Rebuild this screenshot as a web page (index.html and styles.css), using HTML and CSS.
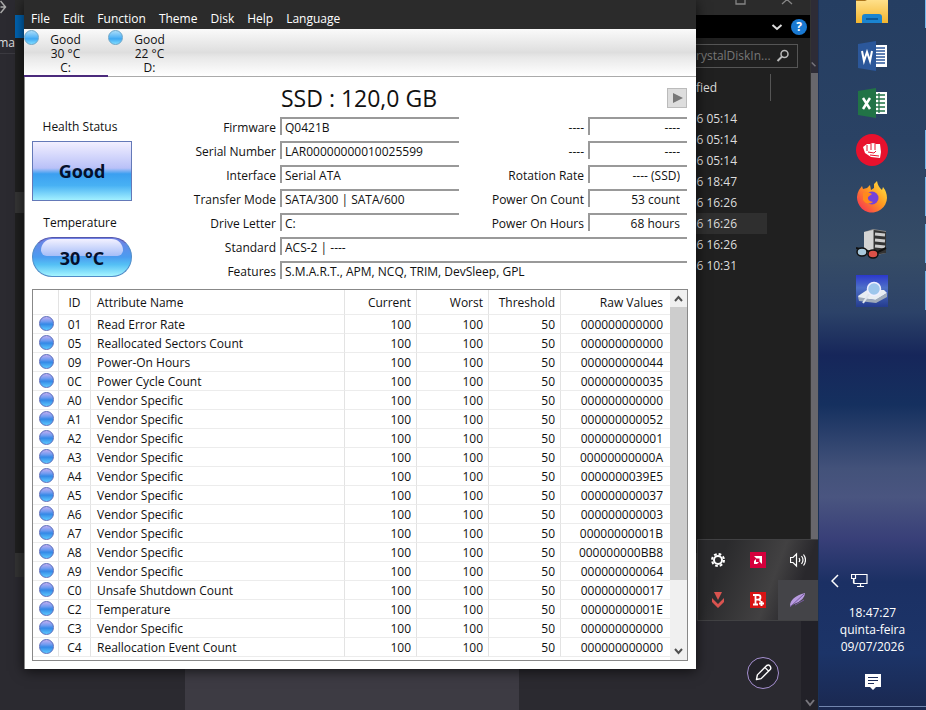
FILE: index.html
```
<!DOCTYPE html>
<html lang="en">
<head>
<meta charset="utf-8">
<title>CrystalDiskInfo</title>
<link rel="stylesheet" href="styles.css">
</head>
<body>
<div class="desktop">
  <main class="workspace">
    <div class="backpage">
      <div class="back-left">
        <svg class="arrow" viewBox="0 0 14 16"><path d="M0 7h5M0 1l5 6-5 6" fill="none" stroke="#aaa" stroke-width="1.5"/></svg>
        <span>tma</span>
      </div>
      <div class="back-panel"></div>
      <div class="back-scroll top"><svg viewBox="0 0 8 8"><path d="M1 2l5 5" stroke="#77757c" stroke-width="2"/></svg></div>
      <div class="back-scroll bottom"><svg viewBox="0 0 10 8"><path d="M1 1l4 5 4-5" fill="none" stroke="#77757c" stroke-width="2"/></svg></div>
      <button class="compose" aria-label="Edit"><svg viewBox="0 0 32 32"><path d="M9 23l1-5 10-10q2-1 3 0 2 2 1 4L14 22zM18 10l4 4" fill="none" stroke="#fff" stroke-width="1.5" stroke-linejoin="round"/></svg></button>
    </div>

    <section class="explorer" aria-label="Explorer">
      <div class="ex-title"><svg viewBox="0 0 114 15"><path d="M40-6h9v10h-9zM86-5l10 9M96-5l-10 9" fill="none" stroke="#858585" stroke-width="1.3"/></svg></div>
      <div class="ex-ribbon">
        <svg class="chev" viewBox="0 0 12 12"><path d="M1.500 4l4.500 4 4.500-4" fill="none" stroke="#ddd" stroke-width="2"/></svg>
        <button class="help" aria-label="Help">?</button>
      </div>
      <div class="ex-address"><div class="search"><span>rystalDiskIn...</span><svg viewBox="0 0 14 14"><circle cx="8.500" cy="5" r="3.500" fill="none" stroke="#bbb" stroke-width="1.500"/><path d="M6 7.500L1.500 12" stroke="#bbb" stroke-width="2"/></svg></div></div>
      <div class="ex-head"><span>fied</span></div>
      <ul class="ex-list">
        <li>6 05:14</li><li>6 05:14</li><li>6 05:14</li><li>6 18:47</li><li class="tree">6 16:26</li><li class="sel">6 16:26</li><li>6 16:26</li><li>6 10:31</li>
      </ul>
      <div class="ex-status"></div>
    </section>

    <section class="tray" aria-label="Tray">
      <button aria-label="Settings"><svg viewBox="0 0 16 16"><circle cx="8" cy="8" r="4" fill="none" stroke="#fff" stroke-width="2"/><circle cx="8" cy="8" r="6" fill="none" stroke="#fff" stroke-width="2" stroke-dasharray="2.700 2"/></svg></button>
      <button aria-label="Graphics"><svg viewBox="0 0 16 16"><path fill="#d5003c" d="M0 0h16v16H0z"/><path fill="#fff" d="M4 4h8v8l-2.500-2.500v-3h-3zM4 9l2-2v3h3l-2 2H4z"/></svg></button>
      <button aria-label="Volume"><svg viewBox="0 0 16 16"><path d="M.500 5.500H3l3.500-3.500v12L3 10.500H.500zM9 6q1.500 2 0 4M11.500 4q3 4 0 8M13.500 2.500q4 5.500 0 11" fill="none" stroke="#fff" stroke-width="1.200"/></svg></button>
      <button aria-label="Driver"><svg viewBox="0 0 16 16"><path fill="#d9534f" d="M4 0h8l-4 8zM2 6l6 6 6-6v4l-6 6-6-6z"/></svg></button>
      <button aria-label="Antivirus"><svg viewBox="0 0 16 16"><path fill="#d81414" d="M0 0h16v16H0z"/><path d="M3 3h5q2.500 0 2.500 2.300T8 7.600H5h3.500q2 .4 1.500 2M3 12.500h5M5.500 3v9" fill="none" stroke="#fff" stroke-width="1.800"/><path d="M11.500 9v5M9 11.500h5" stroke="#fff" stroke-width="2"/></svg></button>
      <button class="active" aria-label="Feather"><svg viewBox="0 0 16 16"><path fill="#b89be0" d="M0 14Q0 5 15 1q0 7-11 11z"/><path d="M0 15L14 2M5 13l9-5" stroke="#765a9e" stroke-width="1"/></svg></button>
    </section>

    <section class="diskinfo" aria-label="CrystalDiskInfo">
      <nav class="menu">
        <button>File</button><button>Edit</button><button>Function</button><button>Theme</button><button>Disk</button><button>Help</button><button>Language</button>
      </nav>
      <div class="disks">
        <button class="disk current"><i class="orb light"></i><span>Good<br>30 °C<br>C:</span></button>
        <button class="disk"><i class="orb light"></i><span>Good<br>22 °C<br>D:</span></button>
      </div>
      <div class="body">
        <div class="summary">
          <div class="status">
            <div class="caption">Health Status</div>
            <button class="health">Good</button>
            <div class="caption second">Temperature</div>
            <button class="temp"><span>30 °C</span></button>
          </div>
          <div class="details">
            <div class="model"><h1>SSD : 120,0 GB</h1><button class="next" aria-label="Next disk"><svg viewBox="0 0 18 18"><path d="M5 4l10 5-10 5z" fill="#777"/></svg></button></div>
            <div class="fields">
              <label for="fw">Firmware</label><input id="fw" readonly value="Q0421B">
              <label for="x1">----</label><input id="x1" class="num" readonly value="----">
              <label for="sn">Serial Number</label><input id="sn" readonly value="LAR00000000010025599">
              <label for="x2">----</label><input id="x2" class="num" readonly value="----">
              <label for="if">Interface</label><input id="if" readonly value="Serial ATA">
              <label for="rr">Rotation Rate</label><input id="rr" class="num" readonly value="---- (SSD)">
              <label for="tm">Transfer Mode</label><input id="tm" readonly value="SATA/300 | SATA/600">
              <label for="pc">Power On Count</label><input id="pc" class="num" readonly value="53 count">
              <label for="dl">Drive Letter</label><input id="dl" readonly value="C:">
              <label for="ph">Power On Hours</label><input id="ph" class="num" readonly value="68 hours">
              <label for="st">Standard</label><input id="st" class="wide" readonly value="ACS-2 | ----">
              <label for="ft">Features</label><input id="ft" class="wide" readonly value="S.M.A.R.T., APM, NCQ, TRIM, DevSleep, GPL">
            </div>
          </div>
        </div>
        <div class="list">
          <div class="list-view">
          <table>
            <colgroup><col class="c-orb"><col class="c-id"><col><col class="c-n"><col class="c-n"><col class="c-n"><col class="c-raw"></colgroup>
            <thead><tr><th></th><th>ID</th><th>Attribute Name</th><th>Current</th><th>Worst</th><th>Threshold</th><th>Raw Values</th></tr></thead>
            <tbody>
            <tr><td><i class="orb"></i></td><td>01</td><td>Read Error Rate</td><td>100</td><td>100</td><td>50</td><td>000000000000</td></tr>
            <tr><td><i class="orb"></i></td><td>05</td><td>Reallocated Sectors Count</td><td>100</td><td>100</td><td>50</td><td>000000000000</td></tr>
            <tr><td><i class="orb"></i></td><td>09</td><td>Power-On Hours</td><td>100</td><td>100</td><td>50</td><td>000000000044</td></tr>
            <tr><td><i class="orb"></i></td><td>0C</td><td>Power Cycle Count</td><td>100</td><td>100</td><td>50</td><td>000000000035</td></tr>
            <tr><td><i class="orb"></i></td><td>A0</td><td>Vendor Specific</td><td>100</td><td>100</td><td>50</td><td>000000000000</td></tr>
            <tr><td><i class="orb"></i></td><td>A1</td><td>Vendor Specific</td><td>100</td><td>100</td><td>50</td><td>000000000052</td></tr>
            <tr><td><i class="orb"></i></td><td>A2</td><td>Vendor Specific</td><td>100</td><td>100</td><td>50</td><td>000000000001</td></tr>
            <tr><td><i class="orb"></i></td><td>A3</td><td>Vendor Specific</td><td>100</td><td>100</td><td>50</td><td>00000000000A</td></tr>
            <tr><td><i class="orb"></i></td><td>A4</td><td>Vendor Specific</td><td>100</td><td>100</td><td>50</td><td>0000000039E5</td></tr>
            <tr><td><i class="orb"></i></td><td>A5</td><td>Vendor Specific</td><td>100</td><td>100</td><td>50</td><td>000000000037</td></tr>
            <tr><td><i class="orb"></i></td><td>A6</td><td>Vendor Specific</td><td>100</td><td>100</td><td>50</td><td>000000000003</td></tr>
            <tr><td><i class="orb"></i></td><td>A7</td><td>Vendor Specific</td><td>100</td><td>100</td><td>50</td><td>00000000001B</td></tr>
            <tr><td><i class="orb"></i></td><td>A8</td><td>Vendor Specific</td><td>100</td><td>100</td><td>50</td><td>000000000BB8</td></tr>
            <tr><td><i class="orb"></i></td><td>A9</td><td>Vendor Specific</td><td>100</td><td>100</td><td>50</td><td>000000000064</td></tr>
            <tr><td><i class="orb"></i></td><td>C0</td><td>Unsafe Shutdown Count</td><td>100</td><td>100</td><td>50</td><td>000000000017</td></tr>
            <tr><td><i class="orb"></i></td><td>C2</td><td>Temperature</td><td>100</td><td>100</td><td>50</td><td>00000000001E</td></tr>
            <tr><td><i class="orb"></i></td><td>C3</td><td>Vendor Specific</td><td>100</td><td>100</td><td>50</td><td>000000000000</td></tr>
            <tr><td><i class="orb"></i></td><td>C4</td><td>Reallocation Event Count</td><td>100</td><td>100</td><td>50</td><td>000000000000</td></tr>
            </tbody>
          </table>
          </div>
          <div class="scrollbar">
            <svg viewBox="0 0 17 17"><path d="M5 11l3.500-4 3.500 4" fill="none" stroke="#505050" stroke-width="2"/></svg>
            <div class="thumb"></div>
            <svg viewBox="0 0 17 17"><path d="M5 6l3.500 4L12 6" fill="none" stroke="#505050" stroke-width="2"/></svg>
          </div>
        </div>
      </div>
    </section>
  </main>

  <aside class="taskbar">
    <div class="apps">
      <button class="run" aria-label="Files"><svg viewBox="0 0 32 32"><defs><linearGradient id="fo" x2="0" y2="1"><stop stop-color="#ffe08a"/><stop offset="1" stop-color="#f3b52e"/></linearGradient></defs><path fill="url(#fo)" d="M0 0h32v23H0z"/><path fill="#a9731c" d="M0 0h11l-2 1H0z"/><path fill="#1b84d0" d="M6 23V17q0-3 3-3h14q3 0 3 3v6z"/><path fill="#0c5a9c" d="M10 18h12v2H10z"/></svg></button>
      <button aria-label="Word"><svg viewBox="0 0 32 32"><path fill="#fff" d="M16 5h14v22H16z"/><path d="M18 8h10M18 11h10M18 14h10M18 17h10M18 20h10M18 23h10" stroke="#2b579a" stroke-width="1.300"/><path fill="#2b579a" d="M1 4l18-3v30L1 28z"/><path d="M5 11l2 10 3-9 3 9 2-10" fill="none" stroke="#fff" stroke-width="2"/></svg></button>
      <button aria-label="Excel"><svg viewBox="0 0 32 32"><path fill="#fff" d="M16 5h14v22H16z"/><path d="M18 8h10M18 12h10M18 16h10M18 20h10M18 24h10M22 6v20" stroke="#217346" stroke-width="1.300"/><path fill="#217346" d="M1 4l18-3v30L1 28z"/><path d="M6 11l7 11M13 11L6 22" stroke="#fff" stroke-width="2.500"/></svg></button>
      <button class="run" aria-label="Fist"><svg viewBox="0 0 32 32"><circle cx="16" cy="16" r="16" fill="#e8112d"/><path fill="#fff" d="M7 13l4-3h3l3-1 3 1h4l1 8-1 6-9-1-6-4z"/><path d="M11 11v6M15 10v6M19 10v6M12 18l6 1 2-2M14 21l9 1" fill="none" stroke="#e8112d" stroke-width="1"/></svg></button>
      <button class="run" aria-label="Firefox"><svg viewBox="0 0 32 32"><defs><linearGradient id="ff" x1="1" y1="0" x2="0" y2="1"><stop offset="0" stop-color="#fff04a"/><stop offset=".45" stop-color="#ff9a20"/><stop offset="1" stop-color="#f5215b"/></linearGradient></defs><path fill="url(#ff)" d="M3 9l3-4 1 3 4-1 3-3 1 5 3-2 0-4 3-3q1 6 5 9l1-3q4 5 4 11A15 15 0 1 1 3 9z"/><circle cx="16" cy="17" r="6.500" fill="#7542d9"/><path fill="#ff8a1c" d="M7 12q5-2 9 1l-4 3q-1 4 5 5-6 4-10-2z"/></svg></button>
      <button class="run" aria-label="System viewer"><svg viewBox="0 0 32 32"><path fill="#888" d="M8 4l9-3 13 2v22l-13 3-9-4z"/><path fill="#d4d4d4" d="M8 4l9-2v24l-9-3z"/><path fill="#333" d="M18 2l12 2v21l-12 2z"/><path d="M19 6l10 1M19 12l10 1M19 18l10 1" stroke="#ccc" stroke-width="3"/><path d="M0 20l4 1 8 2 10 1 8-4" fill="none" stroke="#111" stroke-width="2"/><ellipse cx="6" cy="24" rx="5" ry="4" fill="#a9c9dd" stroke="#111" stroke-width="1.500"/><ellipse cx="17" cy="26" rx="5" ry="4" fill="#dc5148" stroke="#111" stroke-width="1.500"/></svg></button>
      <button class="run" aria-label="CrystalDiskInfo"><svg viewBox="0 0 32 32"><defs><linearGradient id="cd" x2="0" y2="1"><stop stop-color="#2b38cc"/><stop offset=".4" stop-color="#4e70c8"/><stop offset="1" stop-color="#243c8e"/></linearGradient></defs><path fill="url(#cd)" d="M0 0h32v32H0z"/><path fill="#e8edf2" d="M2 21l9-6h17l3 3-11 7-17-2z"/><path fill="#9fabba" d="M2 22l17 3 12-7v4l-11 6-17-2z"/><circle cx="18" cy="14" r="6.500" fill="#9dc6ec" stroke="#eef" stroke-width="1.500"/><path d="M13 19l-6 9" stroke="#dfe5ee" stroke-width="2"/></svg></button>
    </div>
    <div class="notify">
      <div class="net">
        <svg class="back" viewBox="0 0 8 14"><path d="M7 1L1 7l6 6" fill="none" stroke="#fff" stroke-width="1.500"/></svg>
        <svg class="monitor" viewBox="0 0 17 15"><path d="M4 1.500h12v9H3v-5M.500 1.500h4v4h-4zM2.500 5v5M6 13.500h7M9.500 11v3" fill="none" stroke="#fff" stroke-width="1.200"/></svg>
      </div>
      <div class="clock">18:47:27<br>quinta-feira<br>09/07/2026</div>
      <button class="messages" aria-label="Notifications"><svg viewBox="0 0 16 16"><path fill="#fff" d="M0 0h16v13h-5l-3 3-3-3H0z"/><path d="M3 3.500h10M3 6.500h10M3 9.500h6" stroke="#1c2c58" stroke-width="1.200"/></svg></button>
    </div>
  </aside>
</div>
</body>
</html>
```
FILE: styles.css
```
* { box-sizing: border-box; }
body {
  margin: 0;
  background: #2b2a30;
  color: #111;
  font: 12px/14px "Open Sans", "Noto Sans", sans-serif;
}
button {
  display: block;
  margin: 0;
  padding: 0;
  border: 0;
  background: none;
  color: inherit;
  font: inherit;
}
svg { display: block; }

.desktop {
  display: grid;
  grid-template-columns: 1fr 108px;
  min-height: 100vh;
  overflow: hidden;
}
.workspace { position: relative; overflow: hidden; }

/* Page behind the windows */
.backpage { position: absolute; inset: 0; background: #2b2a30; }
.back-left {
  display: flex;
  flex-direction: column;
  align-items: flex-end;
  width: 15px;
  height: 54px;
  overflow: hidden;
  border-bottom: 1px solid #3b3a40;
  color: #ddd;
}
.back-left .arrow { width: 15px; height: 16px; margin-bottom: 20px; }
.back-panel {
  position: absolute;
  left: 185px;
  right: 299px;
  bottom: 0;
  height: 60px;
  background: #3d3b43;
}
.back-scroll { position: absolute; right: 0; width: 7px; }
.back-scroll.top { top: 0; height: 540px; padding-top: 60px; background: linear-gradient(#2e2c36 73px, #68676c 73px); }
.back-scroll.top svg { width: 6px; height: 8px; }
.back-scroll.bottom {
  bottom: 0;
  display: flex;
  align-items: flex-end;
  justify-content: center;
  width: 17px;
  height: 90px;
  padding-bottom: 3px;
  background: #222128;
}
.back-scroll.bottom svg { width: 10px; height: 8px; }
.compose {
  position: absolute;
  right: 39px;
  bottom: 21px;
  width: 32px;
  height: 32px;
  border: 1px solid #a58fd0;
  border-radius: 50%;
  background: #232229;
}

/* Explorer window */
.explorer {
  position: absolute;
  left: 15px;
  right: 7px;
  top: 0;
  display: flex;
  flex-direction: column;
  height: 577px;
  background: #202020;
  color: #ddd;
  border-right: 1px solid #333;
}
.ex-title { display: flex; justify-content: flex-end; height: 15px; background: #2b2b2b; }
.ex-title svg { width: 114px; height: 15px; }
.ex-ribbon {
  display: flex;
  align-items: center;
  justify-content: flex-end;
  gap: 8px;
  height: 23px;
  padding-right: 3px;
  background: linear-gradient(90deg, #0063b1 60px, #000 60px);
}
.chev { width: 12px; height: 12px; }
.help {
  width: 16px;
  height: 16px;
  border-radius: 50%;
  background: #1979d2;
  color: #fff;
  font-weight: 700;
  text-align: center;
}
.ex-address { display: flex; justify-content: flex-end; padding: 6px 12px 0 0; }
.search {
  display: flex;
  align-items: center;
  justify-content: space-between;
  width: 103px;
  height: 24px;
  padding-right: 7px;
  border: 1px solid #555;
  color: #777;
}
.search svg { width: 14px; height: 14px; }
.ex-head { display: flex; justify-content: flex-end; padding: 6px 39px 7px 0; }
.ex-head span { width: 75px; height: 27px; border-right: 1px solid #555; line-height: 28px; }
.ex-list { flex: 1; margin: 0; padding: 0 43px 0 0; list-style: none; }
.ex-list li { height: 21px; padding-right: 30px; line-height: 21px; text-align: right; }
.ex-list .sel { background: linear-gradient(90deg, transparent 20px, #2f2f2f 20px); }
.ex-list .tree { background: linear-gradient(90deg, #353535 20px, transparent 20px); }
.ex-status { height: 24px; background: #333; }

/* Tray flyout */
.tray {
  position: absolute;
  right: 0;
  top: 539px;
  display: grid;
  grid-template-columns: repeat(3, 40px);
  grid-auto-rows: 40px;
  border: 1px solid #414143;
  border-right: 0;
  background: linear-gradient(110deg, #2a2a2c 20%, #424142 60%, #29282c 80%);
}
.tray button { display: grid; place-items: center; }
.tray svg { width: 16px; height: 16px; }
.tray .active { background: #444448; }

/* Disk window */
.diskinfo {
  position: absolute;
  left: 24px;
  right: 122px;
  top: 0;
  background: #fff;
  box-shadow: 0 2px 12px #000a;
}
.menu {
  display: flex;
  gap: 13px;
  height: 29px;
  padding: 11px 7px 0;
  background: #2b2b2b;
  color: #fff;
}
.menu button { height: 16px; }
.disks {
  display: flex;
  height: 48px;
  border-bottom: 1px solid #aaa;
  background: linear-gradient(#fafafa, #dedede 50%, #e8e8e8 60%, #fff);
}
.disk { position: relative; width: 84px; height: 48px; padding: 4px 1px 0 0; border-bottom: 2px solid transparent; }
.disk.current { border-bottom-color: #4b2a7c; }
.orb {
  display: block;
  width: 15px;
  height: 15px;
  border: 1px solid #5a6cba;
  border-radius: 50%;
  background: linear-gradient(#c0aef2, #6f9bf0 35%, #3488e6 55%, #5cc8ff);
}
.orb.light {
  position: absolute;
  left: 0;
  top: 1px;
  border-color: #6aa5c8;
  background: linear-gradient(#a8dcfa, #5cb8f6 45%, #3fa8f2 60%, #7fdcff);
}
.body { padding: 8px 8px 8px 7px; border-left: 1px solid #888; }
.summary { display: grid; grid-template-columns: 100px 1fr; padding-right: 1px; }
.caption { padding: 35px 4px 7px 0; text-align: center; }
.caption.second { padding: 15px 4px 7px 0; }
.health {
  width: 100%;
  height: 60px;
  border: 1px solid #6479b8;
  background: linear-gradient(#f2efff, #b9c1f8 45%, #3b9ff0 55%, #48b1f4 75%, #a2f0ff);
  color: #04102c;
  font-size: 18px;
  font-weight: 700;
}
.temp {
  position: relative;
  width: 100%;
  height: 40px;
  padding-top: 2px;
  border: 1px solid #508cc8;
  border-top-color: #5558ac;
  border-radius: 20px;
  background: linear-gradient(#7080e4, #4b9cf0 50%, #55c0f5 70%, #a5f5ff);
  color: #04102c;
  font-size: 18px;
  font-weight: 700;
}
.temp::before {
  content: "";
  position: absolute;
  inset: 1px 8px 20px;
  border-radius: 16px 16px 8px 8px;
  background: linear-gradient(#f3f1ff, #a5bdf8);
}
.temp span { position: relative; }
.model { display: flex; align-items: center; height: 26px; margin-bottom: 6px; }
h1 { flex: 1; margin: 0; padding-left: 149px; font-size: 23px; line-height: 26px; font-weight: 400; }
.next { width: 20px; height: 20px; border: 1px solid #bbb; background: #ddd; }
.fields {
  display: grid;
  grid-template-columns: 144px minmax(100px, 179px) 1fr 99px;
  column-gap: 4px;
  row-gap: 6px;
}
.fields label { height: 18px; padding-top: 2px; text-align: right; line-height: 18px; }
.fields input {
  width: 100%;
  min-width: 0;
  height: 18px;
  margin: 0;
  padding: 1px 7px 0 3px;
  border: 0 solid #999;
  border-width: 2px 0 0 2px;
  border-radius: 0;
  background: none;
  color: inherit;
  font: inherit;
  outline: 0;
}
.fields .num { text-align: right; }
.fields .wide { grid-column: 2 / 5; }

.list { display: flex; margin-top: 10px; border: 1px solid #888; }
.list-view { flex: 1; padding-bottom: 3px; }
table { width: 100%; border-collapse: separate; border-spacing: 0; table-layout: fixed; }
.c-orb { width: 26px; }
.c-id { width: 32px; }
.c-n { width: 72px; }
.c-raw { width: 109px; }
th, td {
  height: 19px;
  padding: 2px 5px 0;
  border-right: 1px solid #e3e3e3;
  border-bottom: 1px solid #ececec;
  font-weight: 400;
  text-align: right;
  white-space: nowrap;
}
th { height: 25px; }
th:nth-child(2), td:nth-child(2) { text-align: center; }
th:nth-child(3), td:nth-child(3) { padding-left: 6px; text-align: left; }
th:last-child, td:last-child { padding-right: 7px; border-right: 0; }
th:first-child, td:first-child { padding: 0 4px 2px 6px; }
.scrollbar { display: flex; flex-direction: column; width: 17px; background: #f0f0f0; }
.scrollbar svg { width: 17px; height: 17px; }
.thumb { height: 273px; margin-bottom: auto; background: #cdcdcd; }

/* Taskbar */
.taskbar {
  display: flex;
  flex-direction: column;
  justify-content: space-between;
  padding-bottom: 3px;
  border-left: 1px solid #1b3157;
  background: linear-gradient(#253e62, #2a4264 20%, #364c66 36%, #2c4268 44%, #16265a 50%, #15305f 57%, #43527a 66%, #4a5580 70%, #383f78 76%, #1b3064 82%, #1c3468 92%, #1a2850);
  color: #fff;
}
.apps { display: grid; grid-template-rows: 28px; grid-auto-rows: 39px; gap: 8px; }
.apps button { display: grid; place-items: center; }
.apps .run { border-right: 1px solid #76b9ed; }
.apps svg { width: 32px; height: 32px; }
.apps button:first-child { place-items: start center; }
.notify { border-bottom: 1px solid #7185ae; }
.net { display: flex; align-items: center; gap: 12px; padding-left: 12px; }
.back { width: 8px; height: 14px; }
.monitor { width: 17px; height: 15px; }
.clock { padding: 16px 0 19px; line-height: 17px; text-align: center; }
.messages { margin: 0 auto 16px; }
.messages svg { width: 16px; height: 16px; }
```
